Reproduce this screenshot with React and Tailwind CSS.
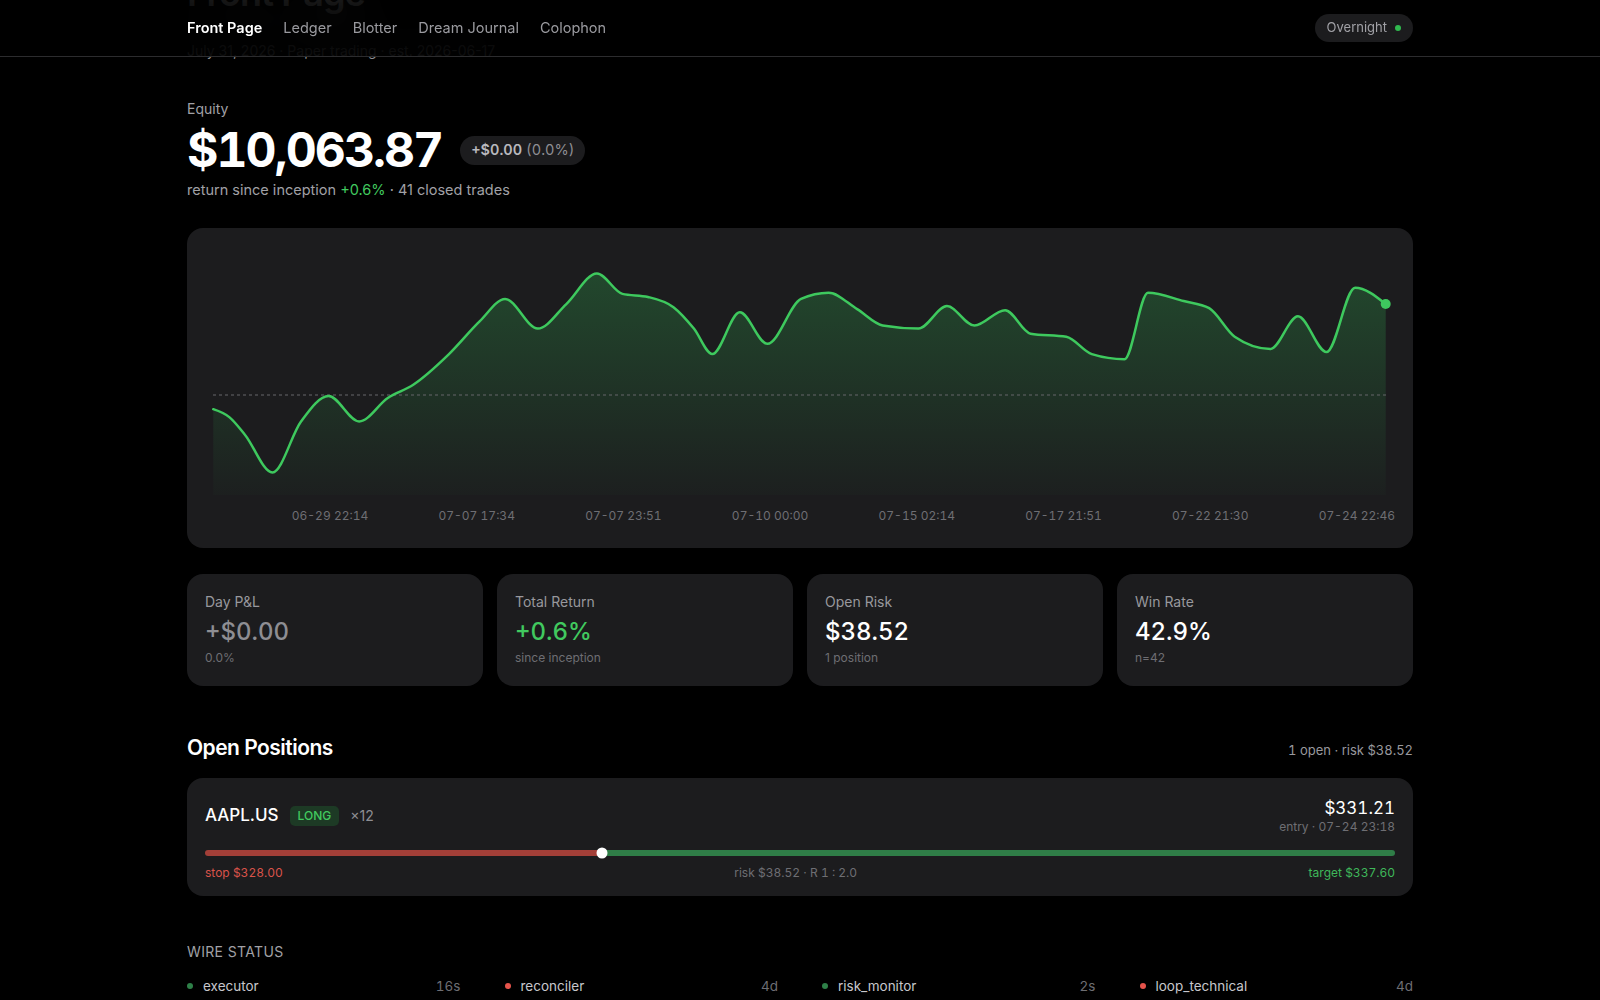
import React from 'react';

const NAV = ['Front Page', 'Ledger', 'Blotter', 'Dream Journal', 'Colophon'];

// equity curve, traced points (screen space), mapped into the svg box
const RAW = [
  [209, 401], [225, 409], [240, 426], [267, 463], [295, 413], [322, 388], [352, 413],
  [380, 390], [405, 377], [440, 347], [470, 315], [495, 293], [527, 322], [555, 298],
  [585, 268], [610, 288], [635, 291], [660, 301], [680, 322], [698, 347], [725, 306],
  [752, 337], [785, 293], [812, 287], [840, 303], [865, 319], [900, 322], [928, 300],
  [955, 319], [985, 304], [1010, 327], [1045, 330], [1070, 347], [1102, 352], [1125, 287],
  [1160, 295], [1185, 302], [1210, 330], [1245, 342], [1272, 310], [1300, 345], [1328, 282],
  [1358, 298],
];
const PTS = RAW.map(([x, y]) => [x * 1.0204 - 213, y * 1.0204 - 254]);

const LABELS = ['06-29 22:14', '07-07 17:34', '07-07 23:51', '07-10 00:00', '07-15 02:14', '07-17 21:51', '07-22 21:30', '07-24 22:46'];

function monotonePath(pts) {
  const n = pts.length;
  const h = [], s = [], t = [];
  for (let i = 0; i < n - 1; i++) {
    h[i] = pts[i + 1][0] - pts[i][0];
    s[i] = (pts[i + 1][1] - pts[i][1]) / h[i];
  }
  for (let i = 1; i < n - 1; i++) {
    const p = (s[i - 1] * h[i] + s[i] * h[i - 1]) / (h[i - 1] + h[i]);
    t[i] = (Math.sign(s[i - 1]) + Math.sign(s[i])) * Math.min(Math.abs(s[i - 1]), Math.abs(s[i]), 0.5 * Math.abs(p)) || 0;
  }
  t[0] = (3 * s[0] - t[1]) / 2;
  t[n - 1] = (3 * s[n - 2] - t[n - 2]) / 2;
  let d = `M${pts[0][0]},${pts[0][1]}`;
  for (let i = 0; i < n - 1; i++) {
    const dx = h[i] / 3;
    d += ` C${pts[i][0] + dx},${pts[i][1] + dx * t[i]} ${pts[i + 1][0] - dx},${pts[i + 1][1] - dx * t[i + 1]} ${pts[i + 1][0]},${pts[i + 1][1]}`;
  }
  return d;
}

const EquityChart = () => {
  const line = monotonePath(PTS);
  const last = PTS[PTS.length - 1];
  const area = `${line} L${last[0]},241 L${PTS[0][0]},241 Z`;
  return (
    <svg width="1174" height="272" viewBox="0 0 1174 272" className="block overflow-visible">
      <defs>
        <linearGradient id="eqfill" x1="0" y1="14" x2="0" y2="241" gradientUnits="userSpaceOnUse">
          <stop offset="0" stopColor="#34c759" stopOpacity="0.26" />
          <stop offset="1" stopColor="#34c759" stopOpacity="0.02" />
        </linearGradient>
      </defs>
      <path d={area} fill="url(#eqfill)" />
      <line x1="0" y1="141" x2="1174" y2="141" stroke="#66666b" strokeWidth="1" strokeDasharray="3 3" />
      <path d={line} fill="none" stroke="#3ec95e" strokeWidth="2.5" strokeLinecap="round" strokeLinejoin="round" />
      <circle cx={last[0]} cy={last[1]} r="5" fill="#3ec95e" />
      {LABELS.map((l, i) => (
        <text key={l} x={117 + i * 146.7} y="266" textAnchor="middle" fill="#6e6e73" fontSize="12" style={{ fontVariantNumeric: 'tabular-nums' }}>
          {l}
        </text>
      ))}
    </svg>
  );
};

const STATS = [
  { label: 'Day P&L', value: '+$0.00', sub: '0.0%', color: 'text-[#8e8e93]' },
  { label: 'Total Return', value: '+0.6%', sub: 'since inception', color: 'text-[#41c95f]' },
  { label: 'Open Risk', value: '$38.52', sub: '1 position', color: 'text-white' },
  { label: 'Win Rate', value: '42.9%', sub: 'n=42', color: 'text-white' },
];

const WIRES = [
  { name: 'executor', age: '16s', ok: true },
  { name: 'reconciler', age: '4d', ok: false },
  { name: 'risk_monitor', age: '2s', ok: true },
  { name: 'loop_technical', age: '4d', ok: false },
];

export default function App() {
  return (
    <div className="min-h-screen bg-black font-[Inter,sans-serif] text-white">
      {/* Top bar */}
      <header className="fixed top-0 inset-x-0 z-10 h-[57px] bg-black/80 backdrop-blur-xl border-b border-[#2c2c2e]">
        <div className="w-[1226px] mx-auto h-full flex items-center justify-between">
          <nav className="flex items-center gap-[21px] text-[14.5px]">
            {NAV.map((item, i) => (
              <span key={item} className={i === 0 ? 'font-semibold text-white' : 'text-[#9a9a9f]'}>
                {item}
              </span>
            ))}
          </nav>
          <div className="flex items-center gap-2 h-7 px-3 rounded-full bg-[#1c1c1e] text-[13px] text-[#a1a1a6]">
            Overnight
            <span className="w-1.5 h-1.5 rounded-full bg-[#30b94f]" />
          </div>
        </div>
      </header>

      <main className="w-[1226px] mx-auto -mt-[27px] pb-12">
        <h1 className="text-4xl leading-10 font-semibold tracking-tight text-[#d0d0d0]">Front Page</h1>
        <p className="mt-[28px] text-sm leading-5 text-[#8e8e93]">July 31, 2026 · Paper trading · est. 2026-06-17</p>

        {/* Equity */}
        <div className="mt-[38px] text-sm leading-5 text-[#a1a1a6]">Equity</div>
        <div className="mt-[7px] flex items-center gap-[18px]">
          <div className="text-5xl leading-none font-bold tracking-[-0.04em] tabular-nums">$10,063.87</div>
          <div className="h-[29px] px-[11px] flex items-center rounded-full bg-[#1c1c1e] text-[14.5px] tabular-nums">
            <span className="font-semibold text-[#b8b8bd]">+$0.00</span>
            <span className="ml-1 text-[#8e8e93]">(0.0%)</span>
          </div>
        </div>
        <p className="mt-[6px] text-[14.5px] leading-5 text-[#a1a1a6]">
          return since inception <span className="text-[#41c95f]">+0.6%</span> · 41 closed trades
        </p>

        {/* Chart */}
        <div className="mt-7 rounded-2xl bg-[#1c1c1e] px-[26px] pt-[26px] pb-[22px]">
          <EquityChart />
        </div>

        {/* Stats */}
        <div className="mt-[26px] grid grid-cols-4 gap-[14px]">
          {STATS.map((s) => (
            <div key={s.label} className="rounded-2xl bg-[#1c1c1e] px-[18px] pt-[18px] pb-5">
              <div className="text-sm leading-5 text-[#98989d]">{s.label}</div>
              <div className={`mt-[4px] text-2xl leading-8 font-medium tabular-nums ${s.color}`}>{s.value}</div>
              <div className="mt-[2px] text-xs leading-4 text-[#6e6e73]">{s.sub}</div>
            </div>
          ))}
        </div>

        {/* Open positions */}
        <div className="mt-12 flex items-baseline justify-between">
          <h2 className="text-[21px] leading-7 font-semibold tracking-tight">Open Positions</h2>
          <span className="text-[13px] text-[#98989d] tabular-nums">1 open · risk $38.52</span>
        </div>

        <div className="mt-4 rounded-2xl bg-[#1c1c1e] px-[18px] pt-[19px] pb-[15px]">
          <div className="flex items-center justify-between">
            <div className="flex items-center gap-[11px]">
              <span className="text-[17px] font-medium">AAPL.US</span>
              <span className="h-5 px-2 flex items-center rounded-[5px] bg-[#1d3a25] text-xs font-medium text-[#41c95f]">LONG</span>
              <span className="text-sm text-[#8e8e93]">×12</span>
            </div>
            <div className="text-right">
              <div className="text-[17px] leading-[22px] tabular-nums">$331.21</div>
              <div className="text-xs leading-4 text-[#6e6e73] tabular-nums">entry · 07-24 23:18</div>
            </div>
          </div>
          <div className="mt-[15px] relative flex h-[6px]">
            <div className="w-1/3 rounded-l-full bg-[#a33f38]" />
            <div className="flex-1 rounded-r-full bg-[#2f7d47]" />
            <span className="absolute left-1/3 top-1/2 -translate-x-1/2 -translate-y-1/2 w-[11px] h-[11px] rounded-full bg-white" />
          </div>
          <div className="mt-[9px] flex justify-between text-xs leading-4 tabular-nums">
            <span className="text-[#d9534a]">stop $328.00</span>
            <span className="text-[#6e6e73]">risk $38.52 · R 1 : 2.0</span>
            <span className="text-[#3fb85a]">target $337.60</span>
          </div>
        </div>

        {/* Wire status */}
        <div className="mt-[46px] text-sm leading-5 tracking-wide text-[#a1a1a6]">WIRE STATUS</div>
        <div className="mt-[14px] grid grid-cols-4 gap-x-11">
          {WIRES.map((w) => (
            <div key={w.name} className="flex items-center text-[13.5px] leading-5">
              <span className={`w-1.5 h-1.5 rounded-full ${w.ok ? 'bg-[#2e8048]' : 'bg-[#e5534b]'}`} />
              <span className="ml-2.5 text-[#c7c7cc]">{w.name}</span>
              <span className="ml-auto text-[#6e6e73] tabular-nums">{w.age}</span>
            </div>
          ))}
        </div>
      </main>
    </div>
  );
}
